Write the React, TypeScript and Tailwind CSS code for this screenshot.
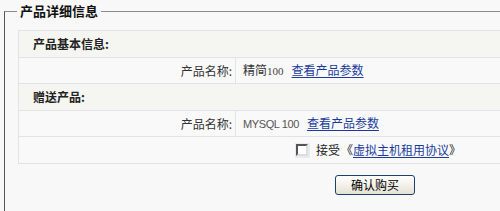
const cjk = { fontFamily: '"Noto Sans CJK SC", "Liberation Sans", sans-serif' };

function LabelRow({ label, value, href }: { label: string; value: React.ReactNode; href: string }) {
  return (
    <tr className="h-[26px] bg-[#f9f9f9]">
      <td className="w-[217px] border border-[#e3e3e3] pr-[3px] text-right align-middle text-[#333]">{label}</td>
      <td className="border border-[#e3e3e3] pl-[7px] align-middle text-[#333]">
        {value}
        <a href="#" className="ml-[8px] text-[#1a3b9c] underline underline-offset-2">
          {href}
        </a>
      </td>
    </tr>
  );
}

function HeadRow({ title }: { title: string }) {
  return (
    <tr className="h-[27px] bg-[#f5f5f1]">
      <td colSpan={2} className="border border-[#e3e3e3] pl-[14px] align-middle font-bold text-[#222]">
        {title}
      </td>
    </tr>
  );
}

export default function App() {
  return (
    <div className="h-[211px] w-[500px] overflow-hidden bg-[#f8f8f8] text-[12px] leading-[14px]" style={cjk}>
      <fieldset className="ml-[4px] mt-[4px] w-[742px] border border-[#555] border-t-[#8a8a8a] px-[13px] pb-[20px] pt-[12px]">
        <legend className="ml-[-1px] px-[3px] text-[13px] font-bold text-[#111]">产品详细信息</legend>
        <table className="w-[714px] border-collapse">
          <tbody>
            <HeadRow title="产品基本信息:" />
            <LabelRow
              label="产品名称:"
              value={
                <span>
                  精简<span className="text-[11px] text-[#444]" style={{ fontFamily: '"Liberation Serif", serif' }}>100</span>
                </span>
              }
              href="查看产品参数"
            />
            <HeadRow title="赠送产品:" />
            <LabelRow
              label="产品名称:"
              value={
                <span className="text-[11px] tracking-[-0.4px] text-[#555]" style={{ fontFamily: '"Liberation Sans", sans-serif' }}>
                  MYSQL 100
                </span>
              }
              href="查看产品参数"
            />
            <tr className="h-[27px] bg-[#f9f9f9]">
              <td colSpan={2} className="border border-[#e3e3e3] align-middle">
                <div className="flex items-center justify-center pl-[6px] text-[#222]">
                  <span className="flex h-[15px] w-[15px] items-center justify-center bg-[#e6ebf3]">
                    <span className="h-[12px] w-[12px] border-2 border-b-[#ddd] border-l-[#555] border-r-[#ddd] border-t-[#555] bg-white" />
                  </span>
                  <span className="ml-[6px]">接受</span>
                  <span className="ml-[1px]">《</span>
                  <a href="#" className="text-[#1a3b9c] underline underline-offset-2">虚拟主机租用协议</a>
                  <span>》</span>
                </div>
              </td>
            </tr>
          </tbody>
        </table>
        <div className="mt-[11px] flex justify-center">
          <button className="h-[20px] w-[80px] rounded-[3px] border border-[#1f3f73] bg-gradient-to-b from-white to-[#e4e2d6] text-[12px] leading-[16px] text-black">
            确认购买
          </button>
        </div>
      </fieldset>
    </div>
  );
}
